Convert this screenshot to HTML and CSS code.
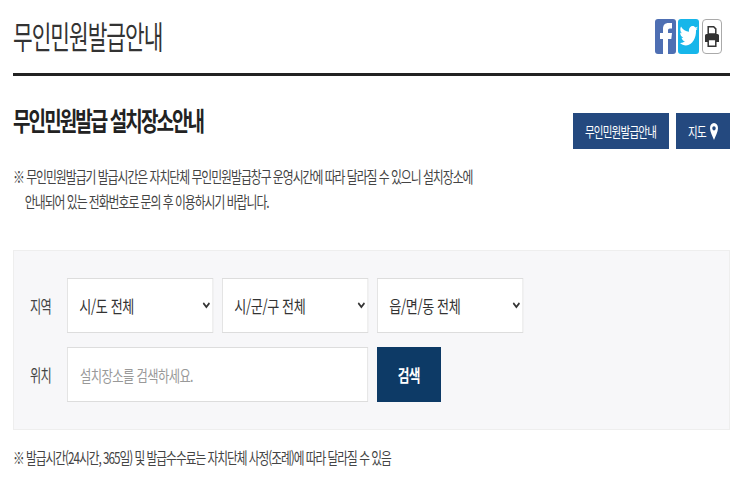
FILE: index.html
```html
<!DOCTYPE html>
<html lang="ko">
<head>
    <meta charset="UTF-8">
    <title>무인민원발급안내</title>
    <link rel="stylesheet" href="styles.css">
</head>
<body>
    <div class="container">
        <div class="page-head">
            <h1>무인민원발급안내</h1>
            <div class="share">
                <a class="share-btn fb" href="#">
                    <svg viewBox="0 0 21 35" width="21" height="35"><path fill="#fff" d="M8 35V20H5v-6h3v-4c0-4 2-6 5.500-6H17v5.500h-2c-1.300 0-2 .7-2 2V14h4l-.7 6H13v15z"/></svg>
                </a>
                <a class="share-btn tw" href="#">
                    <svg viewBox="0 0 21 35" width="21" height="35"><path fill="#fff" d="M20 9.500c-.7.800-1.400 1.400-2 1.800.300 7.200-3.500 15.200-10 15.200-2.300 0-4.400-.9-6-2.500 1.900.2 3.600-.5 5-1.900-1.700 0-3-1.400-3.500-3.400.6.100 1.200.1 1.700-.1-1.800-.6-3-2.600-3-5 .5.400 1.100.6 1.700.6C2.200 12.800 1.800 9.800 3 7.500c2 3.200 4.700 5 8 5.300-.5-3.100 1.200-5.800 3.700-5.800 1.100 0 2.100.6 2.800 1.600.8-.2 1.500-.6 2.200-1.100-.3 1.200-.9 2.200-1.700 2.800.7-.1 1.400-.4 2-.8z"/></svg>
                </a>
                <a class="share-btn print" href="#">
                    <svg viewBox="0 0 14 21" width="14" height="21">
                        <path fill="none" stroke="#333" stroke-width="1.500" d="M3.200.8h5.500l2.100 2.100v5H3.200z"/>
                        <path fill="#333" d="M1.500 8h11A1.500 1.500 0 0 1 14 9.500V16h-3v-3H3v3H0V9.500A1.500 1.500 0 0 1 1.500 8z"/>
                        <path fill="none" stroke="#333" stroke-width="1.500" d="M3.200 13.500h7.600v6.700H3.200z"/>
                    </svg>
                </a>
            </div>
        </div>

        <div class="section-head">
            <h2>무인민원발급 설치장소안내</h2>
            <div class="section-btns">
                <a class="navy-btn guide" href="#"><span class="btn-text">무인민원발급안내</span></a>
                <a class="navy-btn map" href="#"><span class="btn-text">지도</span>
                    <svg viewBox="0 0 8 17" width="8" height="17"><path fill="#fff" fill-rule="evenodd" d="M4 0c2.400 0 4 2.200 4 5.200C8 8.500 5.500 13 4 17 2.500 13 0 8.500 0 5.200 0 2.200 1.600 0 4 0zm0 3.200c-1 0-1.700.9-1.700 2.100S3 7.400 4 7.400s1.700-.9 1.700-2.100S5 3.200 4 3.200z"/></svg>
                </a>
            </div>
        </div>

        <p class="notice">※ 무인민원발급기 발급시간은 자치단체 무인민원발급창구 운영시간에 따라 달라질 수 있으니 설치장소에<br><span class="indent">안내되어 있는 전화번호로 문의 후 이용하시기 바랍니다.</span></p>

        <div class="search-box">
            <div class="search-row">
                <label>지역</label>
                <div class="field"><select><option>시/도 전체</option></select></div>
                <div class="field"><select><option>시/군/구 전체</option></select></div>
                <div class="field"><select><option>읍/면/동 전체</option></select></div>
            </div>
            <div class="search-row">
                <label>위치</label>
                <div class="field wide"><input type="text" placeholder="설치장소를 검색하세요."></div>
                <button><span class="btn-text">검색</span></button>
            </div>
        </div>

        <p class="foot-note">※ 발급시간(24시간, 365일) 및 발급수수료는 자치단체 사정(조례)에 따라 달라질 수 있음</p>
    </div>
</body>
</html>
```

FILE: styles.css
```css
body {
    font-family: "Noto Sans CJK KR", "Noto Sans", sans-serif;
    background-color: #fff;
    color: #333;
    margin: 0;
    padding: 0;
}

.container {
    padding: 0 20px 0 13px;
}

.page-head {
    display: flex;
    justify-content: space-between;
    align-items: center;
    height: 73px;
    border-bottom: 3px solid #222;
}

/* the text in this design is set narrow, so it is squeezed with scaleX */
h1 {
    margin: 0 0 3px;
    font-size: 32px;
    font-weight: 400;
    line-height: 40px;
    letter-spacing: -1.5px;
    color: #333;
    transform: scaleX(0.668);
    transform-origin: left;
    white-space: nowrap;
}

.share {
    display: flex;
    gap: 2px;
    margin: 0 8px 0 0;
}

.share-btn {
    display: flex;
    align-items: center;
    justify-content: center;
    width: 21px;
    height: 35px;
    border-radius: 3px;
}

.fb {
    background-color: #4e6fb3;
}

.tw {
    background-color: #16b6ea;
}

.print {
    box-sizing: border-box;
    width: 20px;
    margin-left: 1px;
    background-color: #fff;
    border: 1px solid #aaa;
    border-radius: 4px;
}

.section-head {
    display: flex;
    justify-content: space-between;
    align-items: flex-start;
    height: 88px;
}

h2 {
    margin: 27px 0 0;
    font-size: 26px;
    font-weight: 700;
    line-height: 34px;
    letter-spacing: -2.6px;
    color: #222;
    transform: scaleX(0.73);
    transform-origin: left;
    white-space: nowrap;
}

.section-btns {
    display: flex;
    gap: 7px;
    margin-top: 37px;
}

.navy-btn {
    display: flex;
    align-items: center;
    justify-content: center;
    height: 36px;
    background-color: #24497f;
    color: #fff;
    font-size: 14px;
    letter-spacing: -1px;
    text-decoration: none;
}

.guide {
    width: 96px;
}

.map {
    width: 54px;
    gap: 4px;
}

.btn-text {
    display: inline-block;
    transform: scaleX(0.75);
    white-space: nowrap;
}

.map .btn-text {
    margin: 0 -3px;
}

.notice {
    margin: 0;
    font-size: 16px;
    line-height: 25px;
    letter-spacing: -1.35px;
    color: #444;
    transform: scaleX(0.74);
    transform-origin: left;
    white-space: nowrap;
}

.indent {
    padding-left: 16px;
}

.search-box {
    margin-top: 36px;
    box-sizing: border-box;
    height: 180px;
    padding: 27px 16px;
    background-color: #f7f7f9;
    border: 1px solid #eee;
}

.search-row {
    display: flex;
    align-items: center;
    gap: 9px;
    margin-bottom: 14px;
}

label {
    width: 28px;
    font-size: 17px;
    letter-spacing: -1px;
    color: #444;
    transform: scaleX(0.72);
    transform-origin: left;
    white-space: nowrap;
}

.field {
    width: 146px;
    height: 55px;
}

.field.wide {
    width: 301px;
}

select {
    box-sizing: border-box;
    width: 130%;
    height: 55px;
    padding: 0 11px;
    font-family: inherit;
    font-size: 17px;
    letter-spacing: -0.5px;
    color: #333;
    background-color: #fff;
    border: 1px solid #ddd;
    border-radius: 0;
    transform: scaleX(0.77);
    transform-origin: left;
}

input {
    box-sizing: border-box;
    width: 130%;
    height: 55px;
    padding: 0 16px;
    font-family: inherit;
    font-size: 16px;
    letter-spacing: -0.8px;
    background-color: #fff;
    border: 1px solid #ddd;
    transform: scaleX(0.77);
    transform-origin: left;
}

input::placeholder {
    color: #999;
}

button {
    width: 64px;
    height: 55px;
    padding: 0;
    font-family: inherit;
    font-size: 17px;
    font-weight: 700;
    letter-spacing: -1px;
    color: #fff;
    background-color: #0d3a66;
    border: none;
    cursor: pointer;
}

.foot-note {
    margin: 16px 0 0;
    font-size: 16px;
    line-height: 22px;
    letter-spacing: -1.35px;
    color: #444;
    transform: scaleX(0.73);
    transform-origin: left;
    white-space: nowrap;
}
```
